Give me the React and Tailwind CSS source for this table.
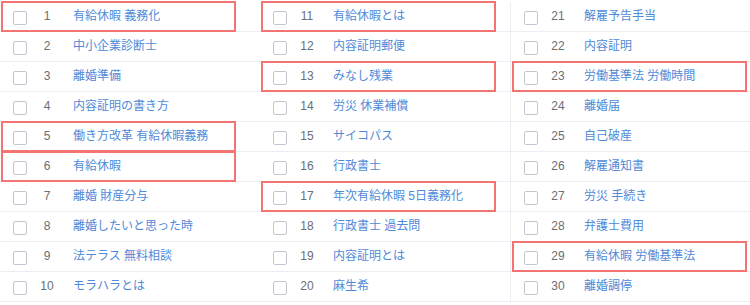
import React from 'react';

const columns = [
    [
        [1, '有給休暇 義務化', true],
        [2, '中小企業診断士'],
        [3, '離婚準備'],
        [4, '内容証明の書き方'],
        [5, '働き方改革 有給休暇義務', true],
        [6, '有給休暇', true],
        [7, '離婚 財産分与'],
        [8, '離婚したいと思った時'],
        [9, '法テラス 無料相談'],
        [10, 'モラハラとは'],
    ],
    [
        [11, '有給休暇とは', true],
        [12, '内容証明郵便'],
        [13, 'みなし残業', true],
        [14, '労災 休業補償'],
        [15, 'サイコパス'],
        [16, '行政書士'],
        [17, '年次有給休暇 5日義務化', true],
        [18, '行政書士 過去問'],
        [19, '内容証明とは'],
        [20, '麻生希'],
    ],
    [
        [21, '解雇予告手当'],
        [22, '内容証明'],
        [23, '労働基準法 労働時間', true],
        [24, '離婚届'],
        [25, '自己破産'],
        [26, '解雇通知書'],
        [27, '労災 手続き'],
        [28, '弁護士費用'],
        [29, '有給休暇 労働基準法', true],
        [30, '離婚調停'],
    ],
];

function Row({ no, label, marked }) {
    return (
        <div className="relative flex items-center h-[30px] border-b border-[#ebeef5]">
            <span className="ml-[13px] mt-[3px] w-[14px] h-[14px] shrink-0 rounded-[2px] border-[1.5px] border-solid border-[#c3c7cf] bg-white" />
            <span className="w-[40px] text-center text-[12px] leading-none text-[#6b6e73] mb-[2px]">{no}</span>
            <span className="ml-[6px] text-[12px] leading-none text-[#4f8ad8] whitespace-nowrap mb-[2px]">{label}</span>
            {marked && (
                <div className="absolute left-px -top-px w-[235px] h-[31px] border-2 border-solid border-[#f47474] pointer-events-none" />
            )}
        </div>
    );
}

export default function App() {
    return (
        <div
            className="w-[750px] h-[305px] bg-white pt-[2px] overflow-hidden"
            style={{ fontFamily: '"Liberation Sans", "Noto Sans CJK JP", sans-serif' }}
        >
            <div className="grid grid-cols-[260px_250px_240px]">
                {columns.map((col, i) => (
                    <div key={i} className={i === 2 ? 'border-l border-[#ebeef5]' : ''}>
                        {col.map(([no, label, marked]) => (
                            <Row key={no} no={no} label={label} marked={marked} />
                        ))}
                    </div>
                ))}
            </div>
        </div>
    );
}
